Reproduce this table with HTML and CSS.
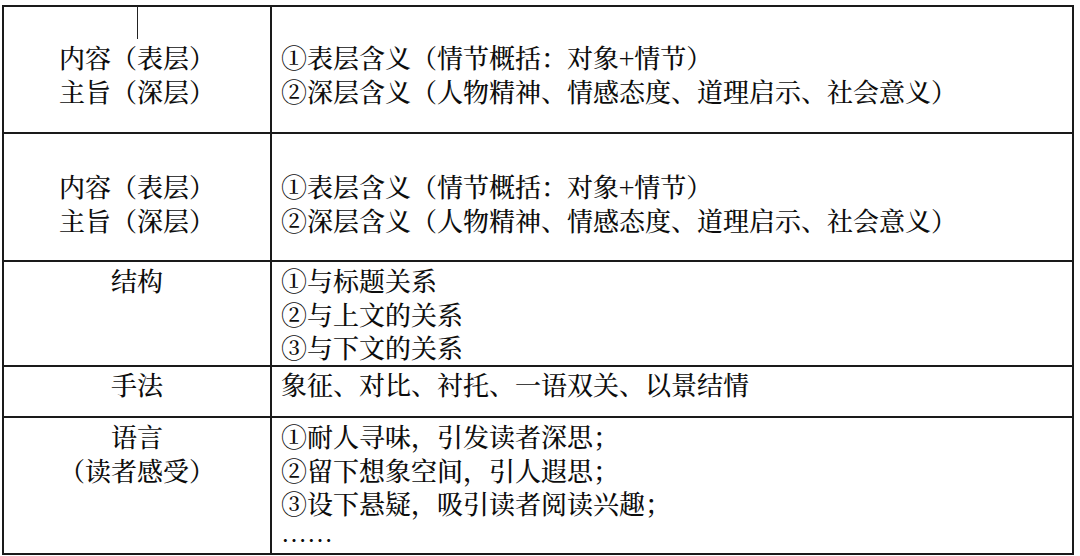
FILE: index.html
```html
<!DOCTYPE html>
<html lang="zh-CN">
<head>
<meta charset="utf-8">
<title>阅读分析表</title>
<link rel="stylesheet" href="styles.css">
</head>
<body>
<table class="sheet">
  <colgroup><col class="col-key"><col class="col-val"></colgroup>
  <tbody>
    <tr class="row r1">
      <th class="key"><span class="tick"></span><div>内容（表层）</div><div>主旨（深层）</div></th>
      <td class="val"><div>①表层含义（情节概括：对象+情节）</div><div>②深层含义（人物精神、情感态度、道理启示、社会意义）</div></td>
    </tr>
    <tr class="row r2">
      <th class="key"><div>内容（表层）</div><div>主旨（深层）</div></th>
      <td class="val"><div>①表层含义（情节概括：对象+情节）</div><div>②深层含义（人物精神、情感态度、道理启示、社会意义）</div></td>
    </tr>
    <tr class="row r3">
      <th class="key"><div>结构</div></th>
      <td class="val"><div>①与标题关系</div><div>②与上文的关系</div><div>③与下文的关系</div></td>
    </tr>
    <tr class="row r4">
      <th class="key"><div>手法</div></th>
      <td class="val"><div>象征、对比、衬托、一语双关、以景结情</div></td>
    </tr>
    <tr class="row r5">
      <th class="key"><div>语言</div><div>（读者感受）</div></th>
      <td class="val"><div>①耐人寻味，引发读者深思；</div><div>②留下想象空间，引人遐思；</div><div>③设下悬疑，吸引读者阅读兴趣；</div><div class="dots">……</div></td>
    </tr>
  </tbody>
</table>
</body>
</html>
```

FILE: styles.css
```css
html, body {
  margin: 0;
  padding: 0;
  background: #ffffff;
}

body {
  font-family: "Noto Serif CJK SC", "Noto Sans CJK SC", serif;
  color: #0d0d0d;
  font-size: 26px;
  line-height: 33.5px;
  font-weight: 500;
}

.sheet {
  border-collapse: collapse;
  table-layout: fixed;
  width: 1072px;
  margin: 5px 0 0 2px;
}

.col-key { width: 268px; }

.sheet th,
.sheet td {
  border: 2px solid #1a1a1a;
  vertical-align: top;
  padding: 0;
  font-weight: 500;
}

.key {
  text-align: center;
  position: relative;
}

.val {
  text-align: left;
  padding-left: 9px !important;
}

.dots {
  font-weight: 700;
  transform: translateY(2px);
}

.tick {
  position: absolute;
  left: 133px;
  top: -1px;
  width: 1px;
  height: 33px;
  background: #222222;
}

.r1 { height: 127px; }
.r2 { height: 128px; }
.r3 { height: 105px; }
.r4 { height: 51px; }
.r5 { height: 135px; }

.r1 th, .r1 td { padding-top: 33px; }
.r2 th, .r2 td { padding-top: 35px; }
.r3 th, .r3 td { padding-top: 1px; }
.r4 th, .r4 td { padding-top: 0; }
.r5 th, .r5 td { padding-top: 1px; }
```
